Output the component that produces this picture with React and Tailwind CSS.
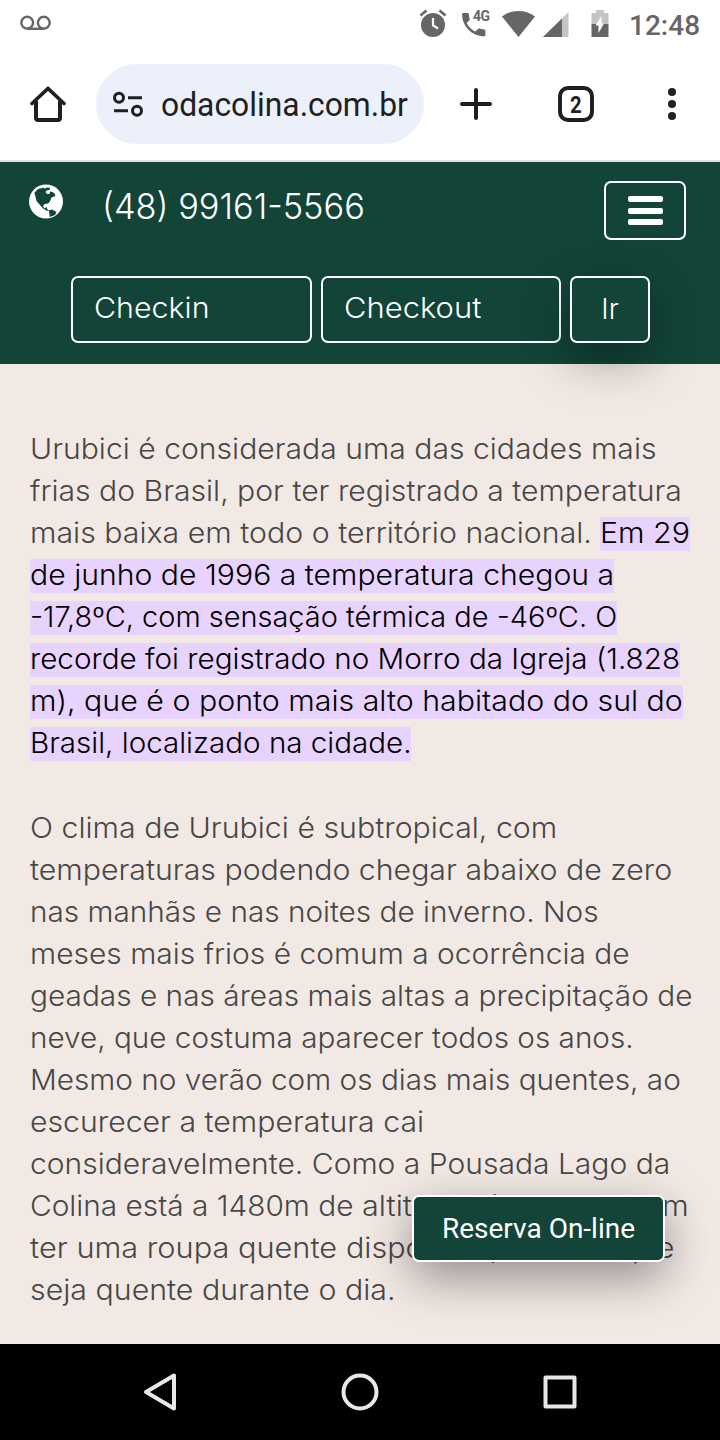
import React, { useLayoutEffect, useRef, useState } from "react";

function Fit({ width, children, className = "" }) {
  const ref = useRef(null);
  const [scale, setScale] = useState(1);

  useLayoutEffect(() => {
    setScale(width / ref.current.offsetWidth);
  }, []);

  return (
    <span className={`inline-block whitespace-pre ${className}`} style={{ width }}>
      <span ref={ref} className="inline-block origin-left" style={{ transform: `scaleX(${scale})` }}>
        {children}
      </span>
    </span>
  );
}

const MARK = "mt-[2px] h-[34px] bg-[#e8d2fe] leading-[32px] text-black";

const INTRO = [
  [{ text: "Urubici é considerada uma das cidades mais", width: 626 }],
  [{ text: "frias do Brasil, por ter registrado a temperatura", width: 652 }],
  [
    { text: "mais baixa em todo o território nacional. ", width: 570 },
    { text: "Em 29", width: 90, mark: true },
  ],
  [{ text: "de junho de 1996 a temperatura chegou a", width: 584, mark: true }],
  [{ text: "-17,8ºC, com sensação térmica de -46ºC. O", width: 587, mark: true }],
  [{ text: "recorde foi registrado no Morro da Igreja (1.828", width: 650, mark: true }],
  [{ text: "m), que é o ponto mais alto habitado do sul do", width: 653, mark: true }],
  [{ text: "Brasil, localizado na cidade.", width: 381, mark: true }],
];

const CLIMATE = [
  [{ text: "O clima de Urubici é subtropical, com", width: 527 }],
  [{ text: "temperaturas podendo chegar abaixo de zero", width: 642 }],
  [{ text: "nas manhãs e nas noites de inverno. Nos", width: 569 }],
  [{ text: "meses mais frios é comum a ocorrência de", width: 600 }],
  [{ text: "geadas e nas áreas mais altas a precipitação de", width: 662 }],
  [{ text: "neve, que costuma aparecer todos os anos.", width: 604 }],
  [{ text: "Mesmo no verão com os dias mais quentes, ao", width: 651 }],
  [{ text: "escurecer a temperatura cai", width: 394 }],
  [{ text: "consideravelmente. Como a Pousada Lago da", width: 640 }],
  [
    { text: "Colina está a 1480m de ", width: 332 },
    { text: "altitude, é sempre bom", width: 327 },
  ],
  [
    { text: "ter uma roupa quente ", width: 316 },
    { text: "disponível, mesmo que", width: 328 },
  ],
  [{ text: "seja quente durante o dia.", width: 365 }],
];

function Paragraph({ lines }) {
  return (
    <p>
      {lines.map((line, i) => (
        <span key={i} className="flex h-[42px] items-center">
          {line.map((part) => (
            <Fit key={part.text} width={part.width} className={part.mark ? MARK : ""}>
              {part.text}
            </Fit>
          ))}
        </span>
      ))}
    </p>
  );
}

function StatusBar() {
  return (
    <div className="flex h-12 items-start bg-white text-[#666666]">
      <svg className="mt-[15px] ml-5 h-4 w-[31px]" viewBox="0 0 31 16" fill="none" stroke="currentColor" strokeWidth="2.4">
        <circle cx="7.2" cy="7.7" r="5.9" />
        <circle cx="23.8" cy="7.7" r="5.9" />
        <path d="M7 13.8h17" />
      </svg>

      {/* alarm */}
      <svg className="mt-[9px] ml-[368px] h-7 w-7" viewBox="0 0 28 28">
        <circle cx="14" cy="16" r="12" fill="currentColor" />
        <path d="M1.5 6.5 7.5 1.5M26.5 6.5l-6-5" stroke="currentColor" strokeWidth="2.6" />
        <path d="M14 9v7.3l5 3.2" fill="none" stroke="white" strokeWidth="2.2" />
      </svg>

      {/* call over 4G */}
      <div className="relative mt-[9px] ml-[15px] h-7 w-7">
        <svg className="h-7 w-7" viewBox="0 0 28 28">
          <path
            fill="currentColor"
            d="M1.4 4h4.2c.7 0 1.3.6 1.3 1.300 0 1.700.3 3.300.8 4.800.1.4 0 .9-.3 1.200L4.700 14c1.900 3.700 4.900 6.700 8.600 8.600l2.700-2.700c.4-.4.9-.5 1.300-.3 1.500.5 3.100.8 4.800.8.7 0 1.300.6 1.300 1.300V26c0 .7-.6 1.300-1.300 1.300C9.900 27.300.1 17.300.1 5.300.1 4.600.7 4 1.400 4z"
          />
        </svg>
        <span className="absolute top-0 left-[11px] text-[14px] leading-[14px] font-bold tracking-[-0.5px]">4G</span>
      </div>

      {/* wifi */}
      <svg className="mt-[11px] ml-[12px] h-[27px] w-[33px]" viewBox="0 0 33 27">
        <path d="M0 5.5C4.500 2 10 0 16.500 0S28.500 2 33 5.500L16.500 26z" fill="currentColor" />
      </svg>

      {/* mobile signal */}
      <svg className="mt-3 ml-[8px] h-[25px] w-[26px]" viewBox="0 0 26 25">
        <path d="M25.500 0v25H0z" fill="#c4c4c4" />
        <path d="M19 6.500V25H0z" fill="currentColor" />
      </svg>

      {/* battery */}
      <svg className="mt-[10px] ml-[22px] h-[27px] w-[18px]" viewBox="0 0 18 27">
        <path d="M5 0h8v3h4.500v11H.5V3H5z" fill="#c4c4c4" />
        <path d="M.5 14h17v13H.5z" fill="currentColor" />
        <path d="M10.500 6v7.500H13L7.500 23v-7.500H4.500z" fill="white" />
      </svg>

      <span className="mt-[10px] ml-[20px] text-[28px] leading-8 font-medium">12:48</span>
    </div>
  );
}

function BrowserBar() {
  return (
    <div className="flex h-[114px] border-b-2 border-[#dfe1e4] bg-white pt-4 text-[#1f1f1f]">
      <svg className="mt-[21px] ml-[30px] h-[38px] w-9" viewBox="0 0 36 38" fill="none" stroke="currentColor" strokeWidth="4">
        <path d="M6 16v17q0 2 2 2h20q2 0 2-2V16" />
        <path d="M2 18.500 18 3.500l16 15" strokeLinecap="round" strokeWidth="3.600" />
      </svg>

      <div className="ml-[30px] flex h-20 w-[328px] items-center rounded-full bg-[#ecf0fa]">
        <svg className="ml-4 h-[27px] w-8" viewBox="0 0 32 27" fill="none" stroke="currentColor" strokeWidth="3">
          <circle cx="7" cy="6.700" r="4.500" />
          <circle cx="25" cy="19.700" r="4.500" />
          <path d="M16 6.700h14M2 19.700h14" />
        </svg>
        <span className="mt-[2px] ml-[17px] text-[33px] leading-10">
          <Fit width={247}>odacolina.com.br</Fit>
        </span>
      </div>

      <svg className="mt-6 ml-9 h-8 w-8" viewBox="0 0 32 32" stroke="currentColor" strokeWidth="4" strokeLinecap="round">
        <path d="M2 16h28M16 2v28" />
      </svg>

      <div className="mt-[22px] ml-[66px] flex h-9 w-9 items-center justify-center rounded-[10px] border-4 border-[#1f1f1f] text-[24px] leading-none font-bold">
        <span className="mt-px scale-x-[0.85]">2</span>
      </div>

      <div className="mt-6 ml-[74px] flex flex-col gap-1">
        <i className="h-2 w-2 rounded-full bg-[#1f1f1f]" />
        <i className="h-2 w-2 rounded-full bg-[#1f1f1f]" />
        <i className="h-2 w-2 rounded-full bg-[#1f1f1f]" />
      </div>
    </div>
  );
}

function SiteHeader() {
  return (
    <header className="h-[202px] bg-[#124438] font-['Inter','Open_Sans',sans-serif] font-light text-white">
      <div className="flex h-[114px] items-start">
        <svg className="mt-[22px] ml-[29px] h-[35px] w-[34px]" viewBox="0 0 34 34">
          <circle cx="17" cy="17" r="17" fill="white" />
          <path
            fill="#124438"
            d="M5.300 8.500 9 4.500l5-1.300 2 .8 2-1 3 .2-.5 2.300-3 .5-1 1.500 1.500 2h2.500l.5-2.500 2.500.5 2 1.500 1 2.500-4 1.500-1 2.500-1 2-1.500 1.500-3.500.5-1.500 2.500 1.500 2 2-1.500 1 2.500 1.500 1.500-2-.3-4-2.200-3-3.500-3.500-4L6.500 12z"
          />
          <path fill="#124438" d="m19.500 26 3.500-1 4.500 2.500-1.500 3-5.500 2V29z" />
        </svg>
        <span className="mt-[21px] ml-[39px] text-[35px] leading-[46px]">
          <Fit width={263}>(48) 99161-5566</Fit>
        </span>
        <button className="mt-[19px] mr-[34px] ml-auto flex h-[59px] w-[82px] flex-col items-center justify-center gap-[5.500px] rounded-[7px] border-2 border-white">
          <i className="h-[6px] w-[35px] rounded-[2px] bg-white" />
          <i className="h-[6px] w-[35px] rounded-[2px] bg-white" />
          <i className="h-[6px] w-[35px] rounded-[2px] bg-white" />
        </button>
      </div>

      <div className="flex gap-[9px] pl-[71px] text-[28px] leading-[61px]">
        <div className="h-[67px] w-[240.5px] rounded-[7px] border-2 border-white pl-[21px]">
          <Fit width={116}>Checkin</Fit>
        </div>
        <div className="h-[67px] w-[240.5px] rounded-[7px] border-2 border-white pl-[21px]">
          <Fit width={137}>Checkout</Fit>
        </div>
        <button className="relative h-[67px] w-20 rounded-[7px] border-2 border-white bg-[#124438] pb-[2px] text-center leading-[58px] shadow-[0_16px_48px_rgba(0,0,0,0.35)]">
          Ir
        </button>
      </div>
    </header>
  );
}

function NavBar() {
  return (
    <div className="flex h-24 items-center justify-between bg-black px-[140px]">
      <svg className="h-10 w-10" viewBox="0 0 40 40" fill="none" stroke="#e8e8e8" strokeWidth="4" strokeLinejoin="round">
        <path d="M34 3.500v33L6 20z" />
      </svg>
      <svg className="h-10 w-10" viewBox="0 0 40 40" fill="none" stroke="#e8e8e8" strokeWidth="4">
        <circle cx="20" cy="20" r="16.500" />
      </svg>
      <svg className="h-10 w-10" viewBox="0 0 40 40" fill="none" stroke="#e8e8e8" strokeWidth="4" strokeLinejoin="round">
        <rect x="5.500" y="5.500" width="29" height="29" />
      </svg>
    </div>
  );
}

export default function App() {
  return (
    <div className="flex h-[1440px] w-[720px] flex-col overflow-hidden font-['Roboto',sans-serif]">
      <StatusBar />
      <BrowserBar />
      <SiteHeader />

      <main className="relative -z-10 h-[980px] bg-[#f2e9e4] pt-[64px] pl-[30px] font-['Inter','Open_Sans',sans-serif] text-[28px] leading-[42px] font-light text-[#474747]">
        <Paragraph lines={INTRO} />
        <div className="h-[43px]" />
        <Paragraph lines={CLIMATE} />

        <button className="absolute top-[831px] left-[412px] h-[67px] w-[253px] rounded-[7px] border-2 border-white bg-[#124438] font-['Roboto',sans-serif] text-[28px] font-normal text-white shadow-[0_16px_48px_rgba(0,0,0,0.4)]">
          Reserva On-line
        </button>
      </main>

      <NavBar />
    </div>
  );
}
